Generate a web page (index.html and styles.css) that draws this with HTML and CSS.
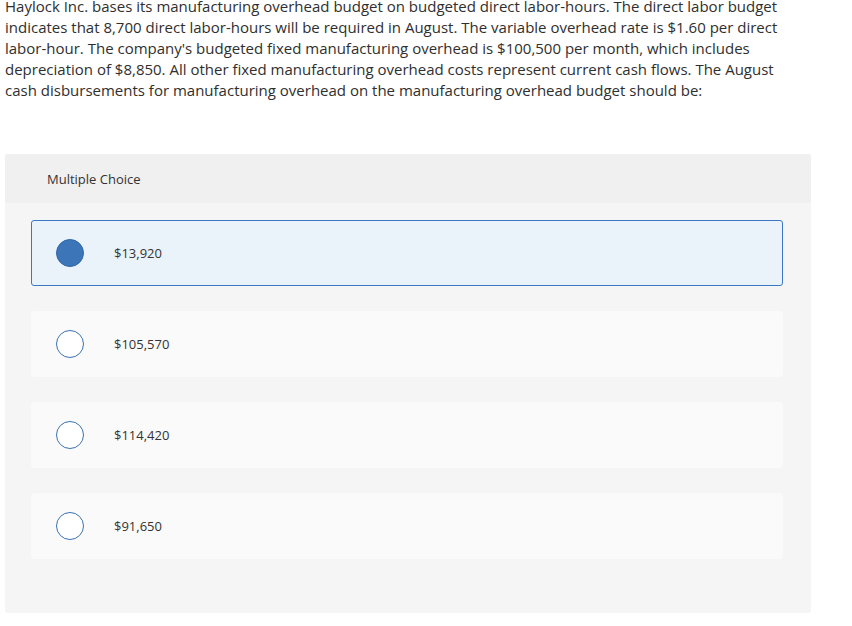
FILE: index.html
```html
<!DOCTYPE html>
<html>
<head>
<meta charset="utf-8">
<link rel="stylesheet" href="styles.css">
</head>
<body>
<p class="question">Haylock Inc. bases its manufacturing overhead budget on budgeted direct labor-hours. The direct labor budget indicates that 8,700 direct labor-hours will be required in August. The variable overhead rate is $1.60 per direct labor-hour. The company's budgeted fixed manufacturing overhead is $100,500 per month, which includes depreciation of $8,850. All other fixed manufacturing overhead costs represent current cash flows. The August cash disbursements for manufacturing overhead on the manufacturing overhead budget should be:</p>
<div class="mc">
  <div class="mc-header">Multiple Choice</div>
  <div class="mc-body">
    <div class="option selected"><span class="radio"></span><span class="label">$13,920</span></div>
    <div class="option"><span class="radio"></span><span class="label">$105,570</span></div>
    <div class="option"><span class="radio"></span><span class="label">$114,420</span></div>
    <div class="option"><span class="radio"></span><span class="label">$91,650</span></div>
  </div>
</div>
</body>
</html>
```
FILE: styles.css
```css
html, body { margin: 0; padding: 0; background: #fff; }
body {
  font-family: "Open Sans", "Lato", sans-serif;
  color: #333;
}
.question {
  margin: -4px 0 0 0;
  padding: 0 5px;
  width: 795px;
  font-size: 15px;
  line-height: 21px;
  color: #2f2f2f;
}
.mc {
  margin: 53px 0 0 5px;
  width: 806px;
  background: #f5f5f5;
  border-radius: 3px;
  overflow: hidden;
}
.mc-header {
  height: 49px;
  background: #f0f0f0;
  display: flex;
  align-items: center;
  padding-left: 42px;
  font-size: 13px;
  color: #333;
}
.mc-body {
  display: flex;
  flex-direction: column;
  gap: 25px;
  padding: 17px 28px 54px 26px;
}
.option {
  height: 66px;
  box-sizing: border-box;
  background: #fafafa;
  border: 1px solid #fafafa;
  border-radius: 3px;
  display: flex;
  align-items: center;
  padding-left: 24px;
}
.option.selected {
  background: #eaf2fa;
  border-color: #3a78c3;
}
.radio {
  width: 28px;
  height: 28px;
  box-sizing: border-box;
  border: 1px solid #3a72b0;
  border-radius: 50%;
  background: #fff;
  flex: none;
}
.option.selected .radio {
  background: #3c76b8;
  border-color: #2f67a8;
}
.label {
  margin-left: 30px;
  font-size: 13px;
  color: #333;
}
```
